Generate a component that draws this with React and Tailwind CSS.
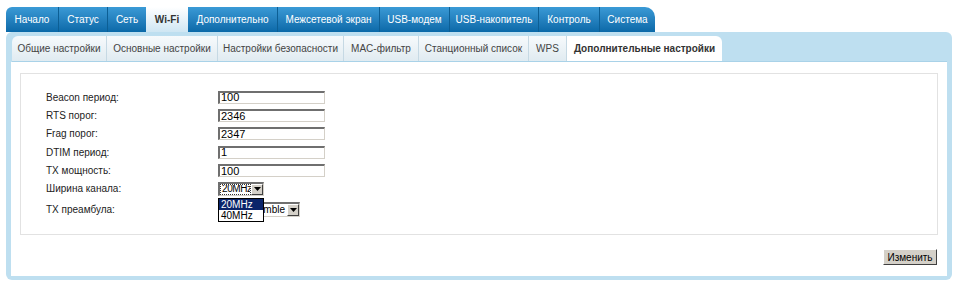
const mainTabs = [
  { label: 'Начало', w: 'w-[52px]' },
  { label: 'Статус', w: 'w-[49px]' },
  { label: 'Сеть', w: 'w-[39px]' },
  { label: 'Wi-Fi', w: 'w-[42px]', active: true },
  { label: 'Дополнительно', w: 'w-[89px]' },
  { label: 'Межсетевой экран', w: 'w-[102px]' },
  { label: 'USB-модем', w: 'w-[70px]' },
  { label: 'USB-накопитель', w: 'w-[89px]' },
  { label: 'Контроль', w: 'w-[61px]' },
  { label: 'Система', w: 'w-[56px]' },
]

const subTabs = [
  { label: 'Общие настройки', w: 'w-[94px]' },
  { label: 'Основные настройки', w: 'w-[111px]' },
  { label: 'Настройки безопасности', w: 'w-[126px]' },
  { label: 'MAC-фильтр', w: 'w-[75px]' },
  { label: 'Станционный список', w: 'w-[110px]' },
  { label: 'WPS', w: 'w-[38px]' },
  { label: 'Дополнительные настройки', w: 'w-[156px]', active: true },
]

const fields = [
  { label: 'Beacon период:', value: '100' },
  { label: 'RTS порог:', value: '2346' },
  { label: 'Frag порог:', value: '2347' },
  { label: 'DTIM период:', value: '1' },
  { label: 'TX мощность:', value: '100' },
]

const inset = 'border-t-2 border-l-2 border-b border-r border-t-[#6f6f6f] border-l-[#6f6f6f] border-b-[#d4d0c8] border-r-[#d4d0c8] bg-white'

function Arrow() {
  return (
    <div className="flex h-full w-[12px] shrink-0 items-center justify-center border border-t-white border-l-white border-b-[#404040] border-r-[#404040] bg-[#d4d0c8]">
      <svg width="7" height="4" viewBox="0 0 7 4">
        <path d="M0 0h7L3.5 4z" fill="#000" />
      </svg>
    </div>
  )
}

export default function App() {
  return (
    <div className="relative h-[288px] w-[956px] overflow-hidden whitespace-nowrap bg-white pl-[6px] pt-[7px] text-[10px] text-[#222]" style={{ fontFamily: '"Liberation Sans", Arial, sans-serif' }}>
      <div className="flex h-[25px]">
        {mainTabs.map((tab, i) => (
          <div
            key={tab.label}
            className={[
              'flex h-full items-center justify-center',
              tab.w,
              tab.active
                ? 'bg-gradient-to-b from-white to-[#cfe6f3] font-bold text-[#333]'
                : 'bg-gradient-to-b from-[#3a9ad6] to-[#0a69a8] text-white',
              i > 0 && !tab.active && !mainTabs[i - 1].active ? 'border-l border-l-[#0c5f95]' : '',
              i === 0 ? 'rounded-tl-[6px]' : '',
              i === mainTabs.length - 1 ? 'rounded-tr-[10px]' : '',
            ].join(' ')}
          >
            {tab.label}
          </div>
        ))}
      </div>

      <div className="w-[946px] rounded-[6px] bg-[#bedff0] px-[5px] pb-[4px] pt-[4px]">
        <div className="ml-[1px] flex h-[26px] border-b border-b-[#a9d2e8]">
          {subTabs.map((tab, i) => (
            <div
              key={tab.label}
              className={[
                'flex h-full items-center justify-center',
                tab.w,
                tab.active
                  ? 'rounded-tr-[6px] bg-white font-bold text-[#333]'
                  : 'bg-gradient-to-b from-[#f7fafc] to-[#e0ebf1] text-[#444]',
                i > 0 ? 'border-l border-l-[#c6d9e4]' : 'rounded-tl-[6px]',
              ].join(' ')}
            >
              {tab.label}
            </div>
          ))}
        </div>

        <div className="h-[214px] bg-white px-[9px] pt-[11px]">
          <div className="relative h-[162px] border border-[#e2e2e2] pl-[25px] pt-[14px]">
            {fields.map((field) => (
              <div key={field.label} className="flex h-[18.4px] items-center">
                <span className="w-[172px]">{field.label}</span>
                <div className={`flex h-[13px] w-[107px] items-center pl-[1px] text-[11px] leading-none text-black ${inset}`}>{field.value}</div>
              </div>
            ))}
            <div className="flex h-[18px] items-center">
              <span className="w-[172px]">Ширина канала:</span>
              <div className={`flex h-[14px] w-[46px] items-stretch ${inset}`}>
                <div className="flex flex-1 items-center overflow-hidden border border-dotted border-[#333] pl-[1px] leading-none tracking-[-0.4px] text-black">20MHz</div>
                <Arrow />
              </div>
            </div>
            <div className="mt-[3px] flex h-[18px] items-center">
              <span className="w-[172px]">TX преамбула:</span>
              <div className={`flex h-[15px] w-[82px] items-stretch ${inset}`}>
                <div className="flex flex-1 items-center justify-end overflow-hidden pr-[2px] leading-none text-black">Long Preamble</div>
                <Arrow />
              </div>
            </div>

            <div className="absolute left-[197px] top-[124px] w-[46px] border border-black bg-white leading-[11px] text-black">
              <div className="bg-[#0a246a] pl-[2px] text-white">20MHz</div>
              <div className="pl-[2px]">40MHz</div>
            </div>
          </div>

          <div className="mt-[14px] flex justify-end pr-[1px]">
            <div className="flex h-[16px] w-[54px] items-center justify-center border border-t-white border-l-white border-b-[#404040] border-r-[#404040] bg-[#d4d0c8] text-black">
              Изменить
            </div>
          </div>
        </div>
      </div>
    </div>
  )
}
